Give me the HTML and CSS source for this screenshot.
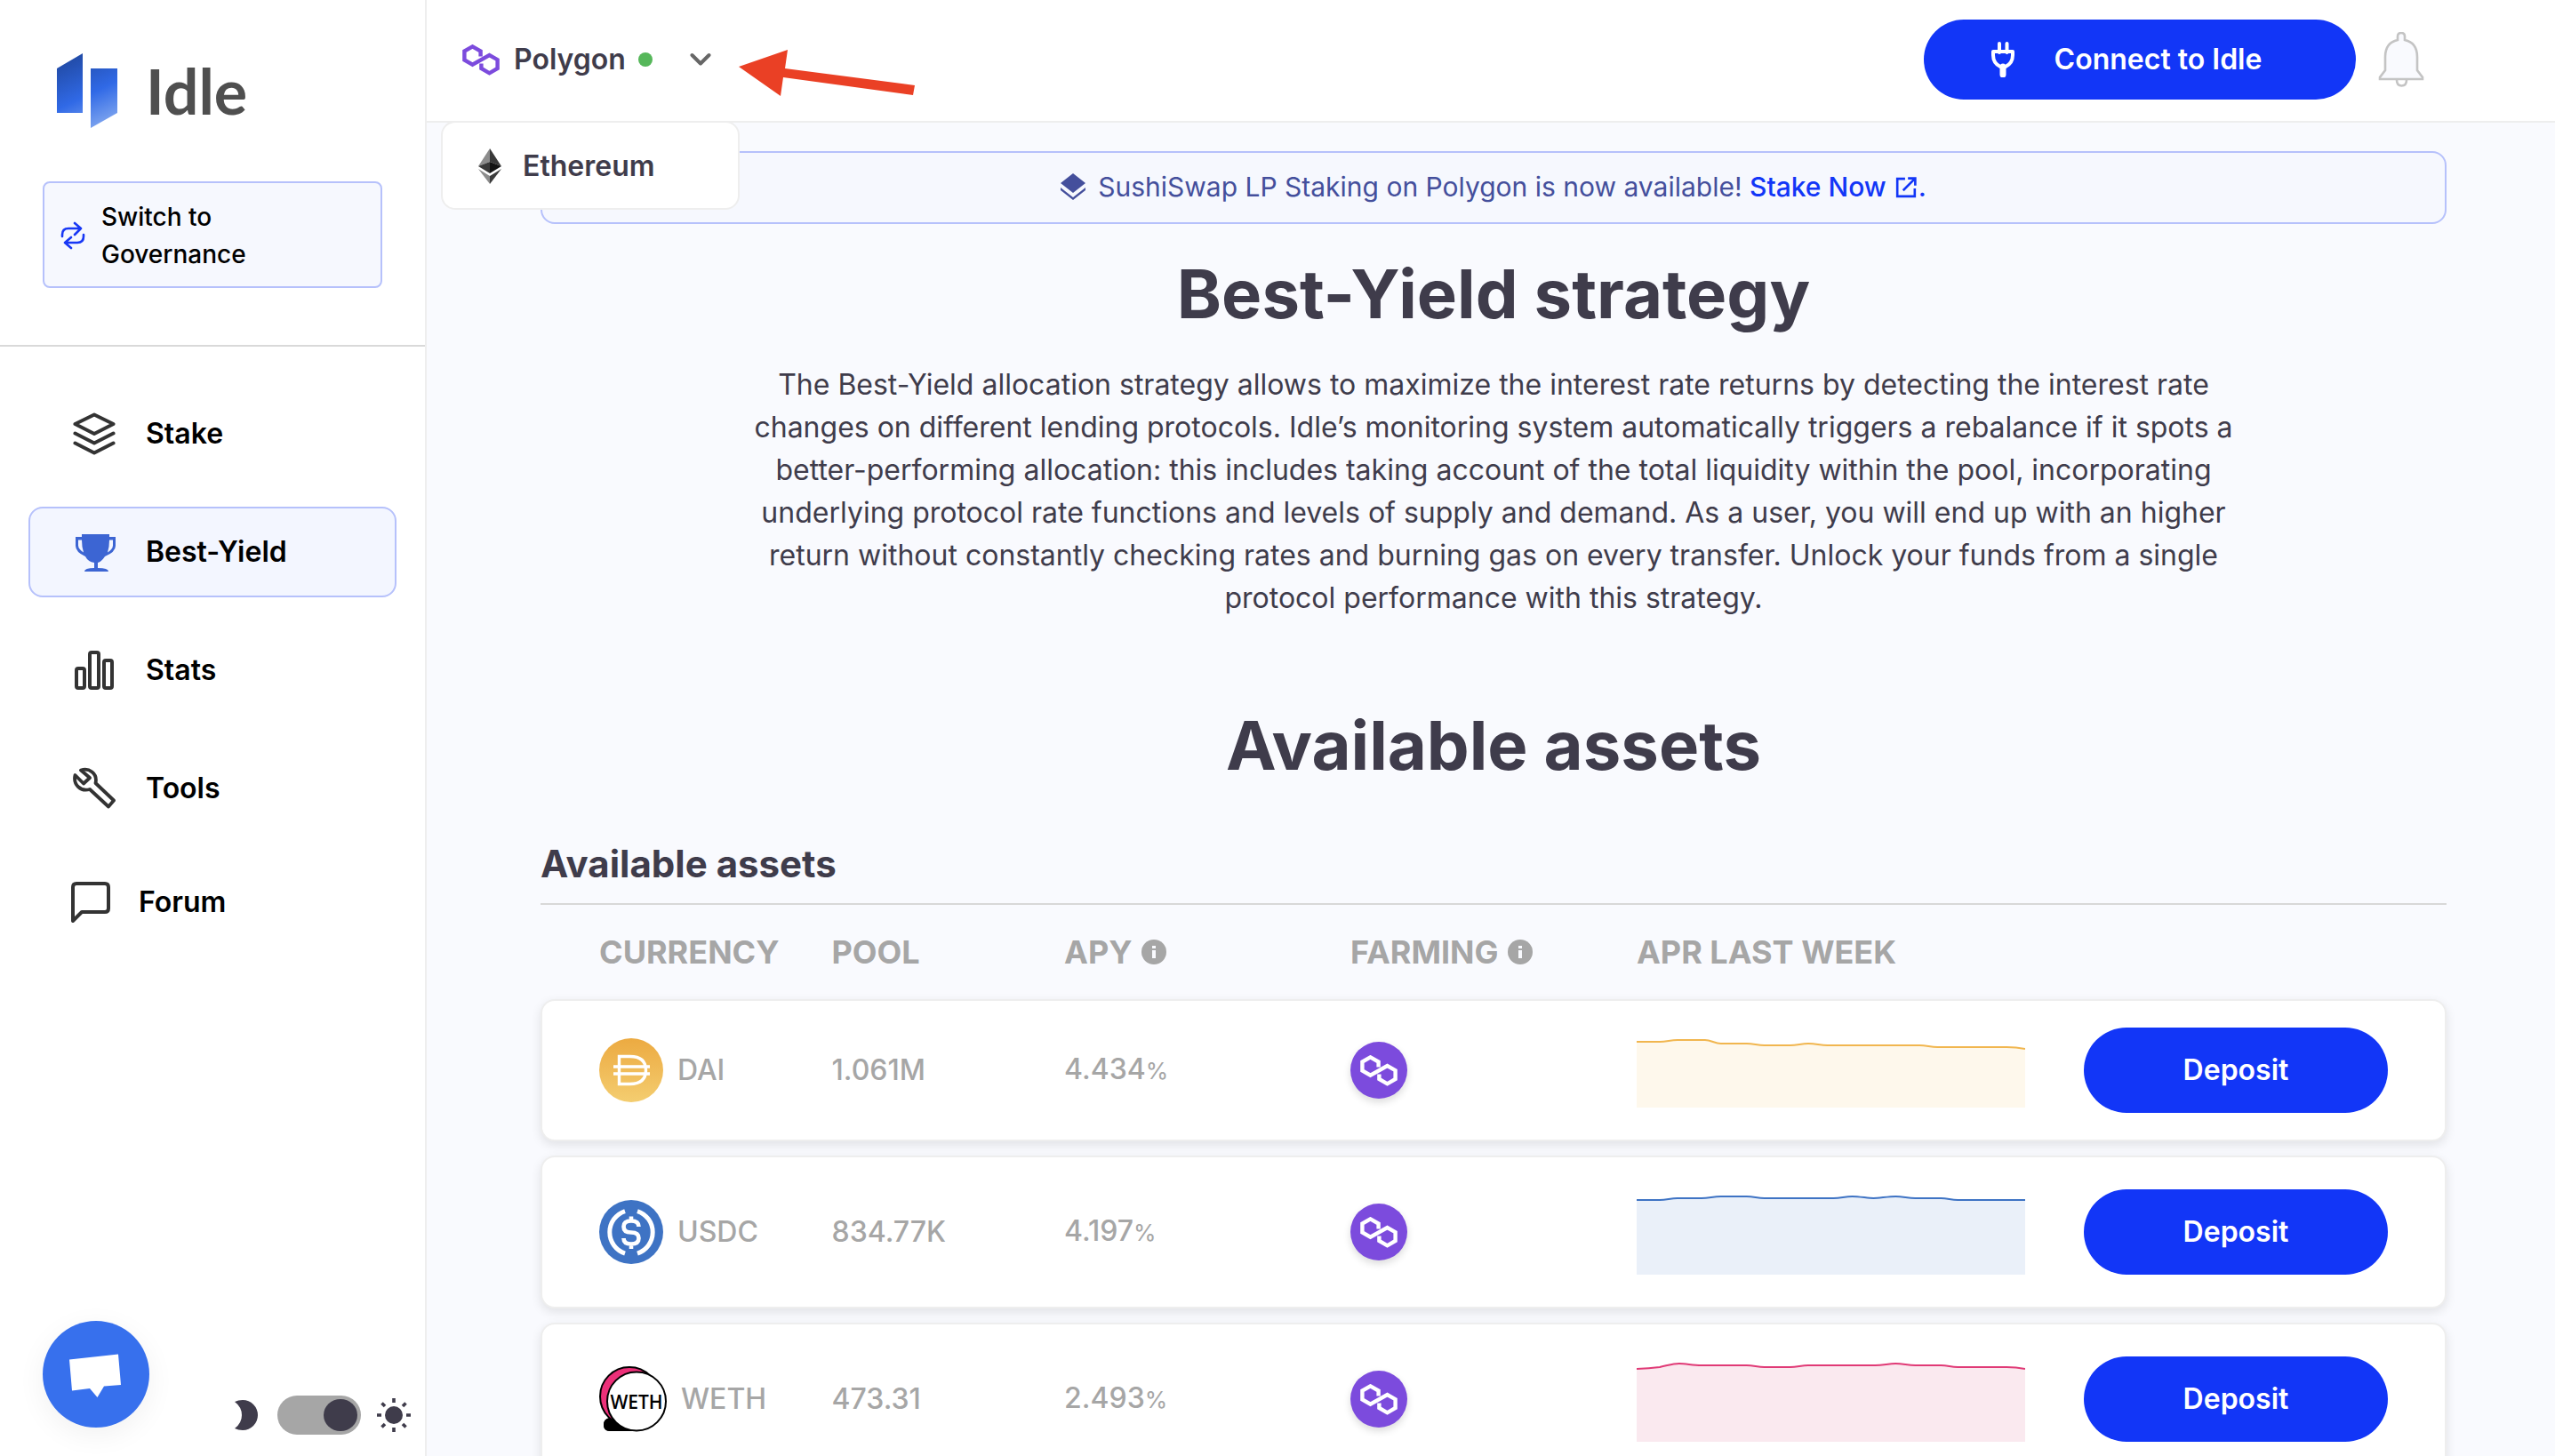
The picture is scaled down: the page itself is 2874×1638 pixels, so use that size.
FILE: index.html
```html
<!DOCTYPE html>
<html lang="en">
<head>
<meta charset="utf-8">
<title>Idle - Best-Yield strategy</title>
<link rel="stylesheet" href="styles.css">
</head>
<body>
<svg class="defs" aria-hidden="true">
  <symbol id="polygon" viewBox="0 0 42 35">
    <path d="M20.6 13.5V7.6L11.5 2.4 2.4 7.6v9.8l9.1 5.2L30.5 12l9.1 5.2V27l-9.1 5.3-9.1-5.3v-5.6" fill="none" stroke="currentColor" stroke-width="4.4"/>
  </symbol>
  <symbol id="info" viewBox="0 0 28 28">
    <circle cx="14" cy="14" r="14" fill="currentColor"/>
    <path d="M12 7h4v3h-4zM12 12h4v9h-4z" fill="#f9fafe"/>
  </symbol>
</svg>
<div class="app">
  <aside class="sidebar">
    <a class="logo" href="#">
      <svg class="logo-mark" viewBox="0 0 68 84" aria-hidden="true">
        <defs><linearGradient id="mark" gradientUnits="userSpaceOnUse" x1="14" y1="0" x2="54" y2="84">
          <stop offset="0" stop-color="#2048a0"/><stop offset=".55" stop-color="#3069e6"/><stop offset="1" stop-color="#86abf0"/>
        </linearGradient></defs>
        <path d="M0 17 29 0v67H0zM38 17h30v50L38 84z" fill="url(#mark)"/>
      </svg>
      <span>Idle</span>
    </a>
    <button class="switch" type="button">
      <svg viewBox="0 0 28 32" aria-hidden="true"><path d="M2 17v-2q0-7 7-7h14M16 2l7 6-7 7M26 15v2q0 7-7 7H6M12 18l-7 6 7 6" fill="none" stroke="#1838f5" stroke-width="2.6" stroke-linecap="round" stroke-linejoin="round"/></svg>
      <span>Switch to Governance</span>
    </button>
    <nav class="nav">
      <a href="#"><svg viewBox="0 0 48 48" aria-hidden="true"><g fill="none" stroke="#333" stroke-width="4" stroke-linecap="round" stroke-linejoin="round"><path d="M24 2.500 45.500 13 24 24 2.500 13z"/><path d="M2.500 23.500 24 34.500l21.500-11M2.500 34.500 24 45.500l21.500-11"/></g></svg>Stake</a>
      <a href="#" class="active" aria-current="page"><svg viewBox="0 0 48 48" aria-hidden="true"><path d="M10 4h31v3h7v10q0 7-12 12-4 6-8 7v6q12 0 12 4H13q0-4 11-4v-6q-7-1-10-7Q3 24 3 17V7h7z" fill="#3c65d3"/><path d="M6 10.500h4q0 8 2 14-6-4-6-8zM45 10.500h-4q0 8-2 14 6-4 6-8z" fill="#f3f6ff"/></svg>Best-Yield</a>
      <a href="#"><svg viewBox="0 0 48 48" aria-hidden="true"><g fill="none" stroke="#333" stroke-width="4"><rect x="4" y="22" width="9" height="22" rx="2"/><rect x="19" y="4" width="10" height="40" rx="2"/><rect x="35" y="13" width="9" height="31" rx="2"/></g></svg>Stats</a>
      <a href="#"><svg viewBox="0 0 48 48" aria-hidden="true"><path d="M9 3.500C18 .5 28 7 25.500 18L46 37.500 40 44.500 19 25C9 28 0 20 2.500 9L12 18.500 19 12z" fill="none" stroke="#333" stroke-width="3.800" stroke-linejoin="round"/></svg>Tools</a>
      <a href="#" class="forum"><svg viewBox="0 0 44 48" aria-hidden="true"><path d="M6 3h32q4 0 4 4v24q0 4-4 4H12L2 45V7q0-4 4-4z" fill="none" stroke="#333" stroke-width="4" stroke-linejoin="round"/></svg>Forum</a>
    </nav>
    <div class="theme">
      <svg class="moon" viewBox="0 0 26 34" aria-hidden="true"><path d="M0 2Q4 0 9 0a17 17 0 0 1 0 34Q4 34 0 32 8 26 8 17T0 2z" fill="#3f3c4b"/></svg>
      <input type="checkbox" role="switch" class="toggle" aria-label="Light theme" checked>
      <svg class="sun" viewBox="0 0 38 38" aria-hidden="true"><circle cx="19" cy="19" r="10" fill="#3f3c4b"/><g stroke="#3f3c4b" stroke-width="3.600"><path d="M19 0v5M19 33v5M0 19h5M33 19h5M5.500 5.500 9 9M29 29l3.500 3.500M5.500 32.500 9 29M29 9l3.500-3.500"/></g></svg>
    </div>
  </aside>
  <div class="page">
    <header class="topbar">
      <div class="network">
        <button class="network-current" type="button" aria-haspopup="true" aria-expanded="true">
          <svg class="poly" aria-hidden="true"><use href="#polygon"/></svg>
          <span>Polygon</span>
          <i class="dot"></i>
          <svg class="chevron" viewBox="0 0 24 16" aria-hidden="true"><path d="m2.500 3 9.500 9.500L21.500 3" fill="none" stroke="#666" stroke-width="4" stroke-linecap="round" stroke-linejoin="round"/></svg>
        </button>
        <div class="network-menu">
          <button type="button">
            <svg viewBox="0 0 26 40" aria-hidden="true"><path d="M13 0 0 20l13-5z" fill="#8c8c8c"/><path d="m13 0 13 20-13-5z" fill="#393939"/><path d="M13 15 0 20l13 8z" fill="#393939"/><path d="m13 15 13 5-13 8z" fill="#141414"/><path d="m0 23 13 8v9z" fill="#8c8c8c"/><path d="m26 23-13 8v9z" fill="#3b3b3b"/></svg>
            <span>Ethereum</span>
          </button>
        </div>
        <svg class="pointer" viewBox="0 0 200 52" aria-hidden="true"><path d="M0 19 55 0l-3 21 146 19-2 11L50 31l-3 21z" fill="#ea4025"/></svg>
      </div>
      <div class="actions">
        <button class="connect" type="button">
          <svg viewBox="0 0 26 40" aria-hidden="true"><path d="M9 2v10M17.500 2v10" stroke="#fff" stroke-width="4" stroke-linecap="round"/><path d="M2 11h22v4q0 9-8 13h-6Q2 24 2 15z" fill="none" stroke="#fff" stroke-width="4" stroke-linejoin="round"/><path d="M13 28v9" stroke="#fff" stroke-width="7" stroke-linecap="round"/></svg>
          <span>Connect to Idle</span>
        </button>
        <button class="bell" type="button" aria-label="Notifications">
          <svg viewBox="0 0 50 62" aria-hidden="true"><g stroke="#c4c4c4" stroke-width="2.600"><path d="M20 50h11v4q0 6.500-5.500 6.500T20 54z" fill="#fff"/><path d="M21 9V5q0-4 4-4t4 4v4q14 3 14 19v15l6 8v2H1v-2l6-8V28Q7 12 21 9z" fill="#f9fafe"/></g></svg>
        </button>
      </div>
    </header>
    <main class="content">
      <div class="banner">
        <svg class="stack" viewBox="0 0 28 30" aria-hidden="true"><path d="m14 0 14 11-14 11L0 11zM0 16l14 11 14-11v3L14 30 0 19z" fill="#444f9c"/></svg>
        <p>SushiSwap LP Staking on Polygon is now available! <a href="#">Stake Now <svg class="ext" viewBox="0 0 22 22" aria-hidden="true"><path d="M10 2H2v18h18v-8M13 1.500h7.500V9M20 2 8 14" fill="none" stroke="currentColor" stroke-width="2.400"/></svg>.</a></p>
      </div>
      <h1>Best-Yield strategy</h1>
      <p class="intro">The Best-Yield allocation strategy allows to maximize the interest rate returns by detecting the interest rate changes on different lending protocols. Idle’s monitoring system automatically triggers a rebalance if it spots a better-performing allocation: this includes taking account of the total liquidity within the pool, incorporating underlying protocol rate functions and levels of supply and demand. As a user, you will end up with an higher return without constantly checking rates and burning gas on every transfer. Unlock your funds from a single protocol performance with this strategy.</p>
      <h2>Available assets</h2>
      <h3>Available assets</h3>
      <table class="assets">
        <thead>
          <tr>
            <th scope="col">CURRENCY</th>
            <th scope="col">POOL</th>
            <th scope="col">APY <svg aria-hidden="true"><use href="#info"/></svg></th>
            <th scope="col">FARMING <svg aria-hidden="true"><use href="#info"/></svg></th>
            <th scope="col">APR LAST WEEK</th>
            <td></td>
          </tr>
        </thead>
        <tbody>
          <tr>
            <td class="coin">
              <svg viewBox="0 0 72 72" aria-hidden="true"><defs><linearGradient id="dai" x2="0" y2="1"><stop stop-color="#ecaa41"/><stop offset="1" stop-color="#f4cd70"/></linearGradient></defs><circle cx="36" cy="36" r="36" fill="url(#dai)"/><path d="M22.500 20.500h12q18 0 18 15.500t-18 15.500h-12zM16 32h41M16 40h41" fill="none" stroke="#fff" stroke-width="3.400"/></svg>
              DAI
            </td>
            <td>1.061M</td>
            <td>4.434<small>%</small></td>
            <td><span class="farm"><svg class="poly" aria-hidden="true"><use href="#polygon"/></svg></span></td>
            <td class="chart"><svg viewBox="0 0 438 84" preserveAspectRatio="none" class="short" aria-hidden="true"><path d="M0 10H26C34 10 38 8 46 8H77C84 8 88 12 95 12H124C132 12 136 14 144 14H173C181 14 186 12 194 12S207 14 215 14H319C327 14 331 16 339 16H417Q428 16 438 18V84H0z" fill="#fef8ec"/><path d="M0 10H26C34 10 38 8 46 8H77C84 8 88 12 95 12H124C132 12 136 14 144 14H173C181 14 186 12 194 12S207 14 215 14H319C327 14 331 16 339 16H417Q428 16 438 18" fill="none" stroke="#f1b64f" stroke-width="2"/></svg></td>
            <td><button class="deposit" type="button">Deposit</button></td>
          </tr>
          <tr>
            <td class="coin">
              <svg viewBox="0 0 72 72" aria-hidden="true"><circle cx="36" cy="36" r="36" fill="#3e73c4"/><path d="M29 12.500A25 25 0 0 0 29 60M43 12.500A25 25 0 0 1 43 60" fill="none" stroke="#fff" stroke-width="5"/><path d="M44.500 30q0-6.500-8.500-6.500T27.500 30t8.500 6.500 8.500 6.500-8.500 6.500-8.500-6.500M36 18.500v6M36 49v6" fill="none" stroke="#fff" stroke-width="4.600"/></svg>
              USDC
            </td>
            <td>834.77K</td>
            <td>4.197<small>%</small></td>
            <td><span class="farm"><svg class="poly" aria-hidden="true"><use href="#polygon"/></svg></span></td>
            <td class="chart"><svg viewBox="0 0 438 96" preserveAspectRatio="none" aria-hidden="true"><path d="M0 12H26C34 12 38 10 46 10H73C82 10 86 8 95 8H124C132 8 136 10 144 10H222C230 10 235 8 243 8S261 10 267 10 284 8 292 8 306 10 314 10H343C351 10 354 12 362 12H438V96H0z" fill="#eaf0f9"/><path d="M0 12H26C34 12 38 10 46 10H73C82 10 86 8 95 8H124C132 8 136 10 144 10H222C230 10 235 8 243 8S261 10 267 10 284 8 292 8 306 10 314 10H343C351 10 354 12 362 12H438" fill="none" stroke="#3e73c4" stroke-width="2"/></svg></td>
            <td><button class="deposit" type="button">Deposit</button></td>
          </tr>
          <tr>
            <td class="coin">
              <svg class="weth" viewBox="0 0 76 74" aria-hidden="true"><path d="M12 58h30v15H12q-7 0-7-7t7-8z"/><circle cx="34" cy="34" r="33" fill="#ec3079" stroke="#000" stroke-width="2"/><path d="M12 58q15 8 30 15H12q-7 0-7-7t7-8z"/><circle cx="42" cy="39.500" r="33" fill="#fff" stroke="#000" stroke-width="2"/><text x="42" y="48" text-anchor="middle" class="weth-label">WETH</text></svg>
              WETH
            </td>
            <td>473.31</td>
            <td>2.493<small>%</small></td>
            <td><span class="farm"><svg class="poly" aria-hidden="true"><use href="#polygon"/></svg></span></td>
            <td class="chart"><svg viewBox="0 0 438 96" preserveAspectRatio="none" aria-hidden="true"><path d="M0 14Q14 13.500 26 12C36 10 40 8 48 8S63 10 73 10H124C132 10 136 12 144 12H173C181 12 186 10 194 10H269C278 10 284 8 292 8S306 10 314 10H343C351 10 354 12 362 12H417Q428 12 438 14V96H0z" fill="#fae9ef"/><path d="M0 14Q14 13.500 26 12C36 10 40 8 48 8S63 10 73 10H124C132 10 136 12 144 12H173C181 12 186 10 194 10H269C278 10 284 8 292 8S306 10 314 10H343C351 10 354 12 362 12H417Q428 12 438 14" fill="none" stroke="#e03a76" stroke-width="2"/></svg></td>
            <td><button class="deposit" type="button">Deposit</button></td>
          </tr>
        </tbody>
      </table>
    </main>
  </div>
</div>
<button class="chat" type="button" aria-label="Open chat">
  <svg viewBox="0 0 120 120" aria-hidden="true"><path d="m30 43.500 55-6 3 34.500-19 1.500L61.500 86 53 76l-20 2.500z" fill="#fff"/></svg>
</button>
</body>
</html>
```
FILE: styles.css
```css
* { box-sizing: border-box; }
body {
  margin: 0;
  font-family: Inter, "Liberation Sans", sans-serif;
  font-size: 32px;
  line-height: 48px;
  color: #3f3c4b;
  background: #f9fafe;
}
button {
  font: inherit;
  color: inherit;
  background: none;
  border: 0;
  padding: 0;
  cursor: pointer;
}
a { text-decoration: none; color: inherit; }
h1, h2, h3, p { margin: 0; }
svg { display: block; flex: none; }
.defs { position: absolute; width: 0; height: 0; }

.app { display: grid; grid-template-columns: 480px 1fr; height: 100vh; }

/* Sidebar */
.sidebar {
  display: flex;
  flex-direction: column;
  background: #fff;
  border-right: 2px solid #eee;
}
.logo {
  display: flex;
  align-items: center;
  gap: 32px;
  margin: 60px 64px;
  height: 84px;
  font-family: Lato, Inter, sans-serif;
  font-weight: 700;
  font-size: 70px;
  color: #4f4f4f;
}
.logo-mark { width: 68px; height: 84px; }
.switch {
  display: flex;
  align-items: center;
  gap: 18px;
  margin: 0 48px;
  padding: 17px 18px 15px;
  border: 2px solid #b6c1fb;
  border-radius: 8px;
  background: #f6f8fe;
  color: #000;
  font-size: 28px;
  line-height: 42px;
  font-weight: 500;
  text-align: left;
}
.switch svg { width: 28px; height: 32px; }
.switch span { max-width: 200px; }
.nav {
  display: flex;
  flex-direction: column;
  gap: 31px;
  margin-top: 64px;
  padding: 47px 32px;
  border-top: 2px solid #d9d9d9;
  color: #000;
  font-weight: 600;
}
.nav a {
  display: flex;
  align-items: center;
  gap: 34px;
  height: 102px;
  padding: 0 48px;
  border: 2px solid transparent;
  border-radius: 16px;
}
.nav svg { width: 48px; height: 48px; }
.nav .active { border-color: #b6c1fb; background: #f3f6ff; }
.nav .forum { height: 92px; padding: 0 46px; gap: 32px; }
.nav .forum svg { width: 44px; }
.theme {
  display: flex;
  align-items: center;
  justify-content: flex-end;
  gap: 18px;
  margin-top: auto;
  padding: 0 16px 24px;
}
.moon { width: 26px; height: 34px; margin-right: 4px; }
.sun { width: 38px; height: 38px; }
.toggle {
  appearance: none;
  display: flex;
  align-items: center;
  width: 94px;
  height: 44px;
  margin: 0;
  padding: 0 4px;
  border-radius: 22px;
  background: #a6a6a6;
}
.toggle::before {
  content: "";
  width: 38px;
  height: 36px;
  border-radius: 50%;
  background: #3f3c4b;
}
.toggle:checked::before { margin-left: auto; }
.chat {
  position: fixed;
  left: 48px;
  bottom: 32px;
  width: 120px;
  height: 120px;
  border-radius: 50%;
  background: #3770ed;
  box-shadow: 0 8px 32px rgba(0, 0, 0, .06);
}

/* Top bar */
.page {
  display: flex;
  flex-direction: column;
  min-width: 0;
  min-height: 0;
}
.topbar {
  display: flex;
  align-items: center;
  justify-content: space-between;
  flex: none;
  height: 138px;
  padding: 0 144px 2px 40px;
  border-bottom: 2px solid #eee;
  background: #fff;
}
.network { position: relative; font-weight: 600; }
.network-current { display: flex; align-items: center; font-weight: 600; }
.poly { width: 42px; height: 35px; color: #7c4bdd; }
.network-current .poly { margin-right: 16px; }
.dot {
  width: 16px;
  height: 16px;
  margin: 0 42px 0 14px;
  border-radius: 50%;
  background: #56b75a;
}
.chevron { width: 24px; height: 16px; }
.network-menu {
  position: absolute;
  z-index: 1;
  top: 93px;
  left: -24px;
  width: 336px;
  border: 2px solid #eee;
  border-radius: 16px;
  background: #fff;
}
.network-menu button {
  display: flex;
  align-items: center;
  gap: 24px;
  height: 96px;
  padding: 2px 0 0 40px;
  font-weight: 600;
}
.network-menu svg { width: 26px; height: 40px; }
.pointer {
  position: absolute;
  top: 13px;
  left: 311px;
  width: 200px;
  height: 52px;
}
.actions { display: flex; align-items: center; gap: 22px; }
.connect {
  display: flex;
  align-items: center;
  justify-content: center;
  gap: 45px;
  width: 486px;
  height: 90px;
  padding-right: 30px;
  border-radius: 45px;
  background: #1236f7;
  color: #fff;
  font-weight: 600;
}
.connect svg { width: 26px; height: 40px; }
.bell svg { width: 58px; height: 62px; }

/* Content */
.content {
  flex: 1;
  min-height: 0;
  overflow: auto;
  scrollbar-width: none;
  padding: 32px 122px 32px 128px;
}
.banner {
  display: flex;
  align-items: center;
  justify-content: center;
  gap: 14px;
  height: 82px;
  padding-bottom: 2px;
  border: 2px solid #b6c1fb;
  border-radius: 16px;
  background: #f6f8fe;
  color: #444f9c;
  font-size: 30px;
}
.stack { width: 28px; height: 30px; }
.banner a { color: #1236f7; font-weight: 500; }
.ext { display: inline-block; width: 24px; height: 24px; margin: 0 2px; vertical-align: -2px; }
h1, h2 {
  font-size: 76px;
  line-height: 96px;
  font-weight: 700;
  text-align: center;
}
h1 { margin: 30px 0 31px; }
h2 { margin: 93px 0 56px; }
h3 {
  padding-bottom: 14px;
  border-bottom: 2px solid #d8d8d8;
  font-size: 42px;
  line-height: 60px;
  font-weight: 700;
}
.intro { max-width: 80%; margin: 0 auto; text-align: center; }

/* Assets */
.assets, .assets thead { display: block; }
.assets tbody { display: flex; flex-direction: column; gap: 16px; }
.assets tr {
  display: grid;
  grid-template-columns: 13fr 13fr 16fr 16fr 25fr 17fr;
  align-items: center;
  padding: 0 64px;
  border: 2px solid transparent;
}
.assets th {
  display: flex;
  align-items: center;
  gap: 10px;
  height: 102px;
  padding: 0;
  font-size: 36px;
  font-weight: 700;
  color: #a6a6a6;
}
.assets th svg { width: 28px; height: 28px; }
.assets tbody tr {
  border-color: #eee;
  border-radius: 16px;
  background: #fff;
  box-shadow: 0 4px 12px rgba(0, 0, 0, .1);
}
.assets td { padding: 0; color: #a6a6a6; font-weight: 500; }
.assets small { font-size: 26px; font-weight: 400; }
.assets .coin { display: flex; align-items: center; gap: 16px; }
.coin svg { width: 72px; height: 72px; }
.coin .weth { width: 76px; height: 74px; }
.weth-label { font: 600 21px "Open Sans", sans-serif; fill: #000; }
.farm {
  display: flex;
  align-items: center;
  justify-content: center;
  width: 64px;
  height: 64px;
  border-radius: 50%;
  background: #7c4bdd;
  box-shadow: 0 4px 8px rgba(0, 0, 0, .14);
}
.farm .poly { color: #fff; }
.assets .chart { padding: 36px 66px 36px 0; }
.chart svg { width: 100%; height: 96px; }
.chart .short { height: 84px; }
.deposit {
  width: 100%;
  height: 96px;
  border-radius: 48px;
  background: #1236f7;
  color: #fff;
  font-weight: 600;
}
```
